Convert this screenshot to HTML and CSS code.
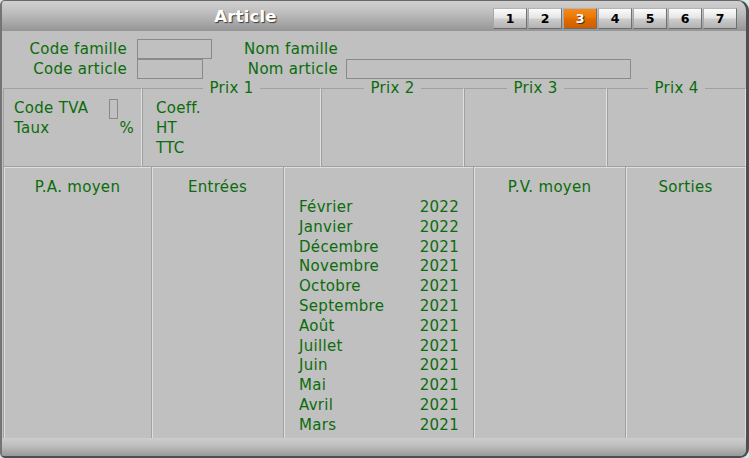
FILE: index.html
```html
<!DOCTYPE html>
<html>
<head>
<meta charset="utf-8">
<title>Article</title>
<link rel="stylesheet" href="styles.css">
</head>
<body>
<div class="window">
  <div class="titlebar">
    <div class="title">Article</div>
    <div class="tabs">
      <span class="tab">1</span>
      <span class="tab">2</span>
      <span class="tab active">3</span>
      <span class="tab">4</span>
      <span class="tab">5</span>
      <span class="tab">6</span>
      <span class="tab">7</span>
    </div>
  </div>

  <div class="idrows">
    <span class="lbl">Code famille</span>
    <span class="field w75"></span>
    <span class="lbl lbl2">Nom famille</span>
    <span></span>
    <span class="lbl">Code article</span>
    <span class="field w66"></span>
    <span class="lbl lbl2">Nom article</span>
    <span class="field w285"></span>
  </div>

  <div class="prices">
    <fieldset class="pbox tva">
      <div class="tvagrid">
        <span>Code TVA</span><span class="field tiny"></span>
        <span>Taux</span><span class="pct">%</span>
      </div>
    </fieldset>
    <fieldset class="pbox p1">
      <legend>Prix 1</legend>
      <div class="plist">
        <span>Coeff.</span>
        <span>HT</span>
        <span>TTC</span>
      </div>
    </fieldset>
    <fieldset class="pbox p2"><legend>Prix 2</legend></fieldset>
    <fieldset class="pbox p3"><legend>Prix 3</legend></fieldset>
    <fieldset class="pbox p4"><legend>Prix 4</legend></fieldset>
  </div>

  <div class="history">
    <div class="col"><div class="colhead">P.A. moyen</div></div>
    <div class="col"><div class="colhead">Entrées</div></div>
    <div class="col months">
      <div class="colhead">&nbsp;</div>
      <div class="mlist">
        <div class="mrow"><span>Février</span><span>2022</span></div>
        <div class="mrow"><span>Janvier</span><span>2022</span></div>
        <div class="mrow"><span>Décembre</span><span>2021</span></div>
        <div class="mrow"><span>Novembre</span><span>2021</span></div>
        <div class="mrow"><span>Octobre</span><span>2021</span></div>
        <div class="mrow"><span>Septembre</span><span>2021</span></div>
        <div class="mrow"><span>Août</span><span>2021</span></div>
        <div class="mrow"><span>Juillet</span><span>2021</span></div>
        <div class="mrow"><span>Juin</span><span>2021</span></div>
        <div class="mrow"><span>Mai</span><span>2021</span></div>
        <div class="mrow"><span>Avril</span><span>2021</span></div>
        <div class="mrow"><span>Mars</span><span>2021</span></div>
      </div>
    </div>
    <div class="col"><div class="colhead">P.V. moyen</div></div>
    <div class="col last"><div class="colhead">Sorties</div></div>
  </div>

  <div class="statusbar"></div>
</div>
</body>
</html>
```

FILE: styles.css
```css
html, body {
  margin: 0;
  padding: 0;
}
body {
  width: 749px;
  height: 458px;
  overflow: hidden;
  background: #d4ebe7;
  font-family: "DejaVu Sans", Verdana, sans-serif;
  font-size: 15px;
  letter-spacing: 0.3px;
  color: #0b6c0b;
}
.window {
  box-sizing: border-box;
  width: 749px;
  height: 458px;
  background: #c0c0c0;
  border-style: solid;
  border-color: #686868 #4e4e4e #4e4e4e #747474;
  border-width: 1px 3px 2px 2px;
  border-radius: 5px 11px 9px 5px;
  overflow: hidden;
  display: flex;
  flex-direction: column;
}

/* title bar */
.titlebar {
  height: 30px;
  flex: none;
  display: flex;
  align-items: flex-start;
  background: linear-gradient(to bottom, #d0d0d0 0%, #bdbdbd 40%, #959595 100%);
}
.title {
  flex: 1;
  text-align: center;
  line-height: 31px;
  font-weight: bold;
  font-size: 16.5px;
  letter-spacing: 0.2px;
  color: #ffffff;
  text-shadow: 1px 1px 1px #3a3a3a;
  padding-right: 4px;
}
.tabs {
  display: flex;
  gap: 1px;
  margin: 7px 9px 0 0;
}
.tab {
  box-sizing: border-box;
  width: 34px;
  height: 21px;
  display: flex;
  align-items: center;
  justify-content: center;
  border: 1px solid;
  border-color: #b4b4b4 #707070 #6a6a6a #a8a8a8;
  background: linear-gradient(to bottom, #fbfbfb 0%, #e4e4e4 48%, #cdcdcd 52%, #b2b2b2 100%);
  font-weight: bold;
  font-size: 12.5px;
  letter-spacing: 0;
  color: #000;
}
.tab.active {
  background: linear-gradient(to bottom, #f58a1c 0%, #ec7500 48%, #e06c00 52%, #cc5f00 100%);
  color: #fff;
  text-shadow: 1px 1px 0 #3a3a3a;
}

/* identification rows */
.idrows {
  flex: none;
  display: grid;
  grid-template-columns: 135px 76px 133px 285px;
  grid-auto-rows: 20px;
  align-items: center;
  padding-top: 8px;
}
.lbl {
  text-align: right;
  padding-right: 10px;
  line-height: 20px;
  white-space: nowrap;
}
.lbl2 {
  padding-right: 8px;
}
.field {
  display: block;
  box-sizing: border-box;
  height: 20px;
  border: 1px solid #8a8a8a;
}
.w75 { width: 75px; }
.w66 { width: 66px; }
.w285 { width: 285px; }

/* price boxes */
.prices {
  flex: none;
  display: flex;
  height: 87px;
  margin-top: 1px;
  padding-left: 1px;
}
.pbox {
  box-sizing: border-box;
  margin: 0;
  padding: 0;
  min-width: 0;
  border: 1px solid;
  border-color: #a0a0a0 #e0e0e0 #a0a0a0 #a0a0a0;
}
.pbox legend {
  margin: 0 auto;
  padding: 0 6px;
  line-height: 16px;
}
.tva { width: 139px; margin-top: 8px; }
.p1 { width: 179px; }
.p2 { width: 143px; }
.p3 { width: 143px; }
.p4 { width: 139px; }

.tvagrid {
  display: grid;
  grid-template-columns: 95px 1fr;
  grid-auto-rows: 20px;
  align-items: center;
  padding: 9px 7px 0 10px;
}
.tiny {
  width: 9px;
  align-self: start;
  margin-top: 1px;
}
.pct {
  text-align: right;
}
.plist {
  display: flex;
  flex-direction: column;
  padding: 2px 0 0 13px;
  line-height: 20px;
}

/* history */
.history {
  flex: 1;
  display: grid;
  grid-template-columns: 148px 132px 190px 152px 121px;
  margin-left: 1px;
}
.col {
  border-left: 1px solid #a2a2a2;
  box-shadow: inset 1px 1px 0 #dedede;
}
.col.last {
  border-right: 1px solid #dedede;
}
.colhead {
  text-align: center;
  padding-top: 10px;
  line-height: 20px;
}
.months {
  padding: 0 14px 0 15px;
}
.mlist {
  padding-top: 1px;
}
.mrow {
  display: flex;
  justify-content: space-between;
  line-height: 19.8px;
}

.statusbar {
  flex: none;
  height: 18px;
  background: linear-gradient(to bottom, #cdcdcd 0%, #bdbdbd 45%, #999999 100%);
}
```
